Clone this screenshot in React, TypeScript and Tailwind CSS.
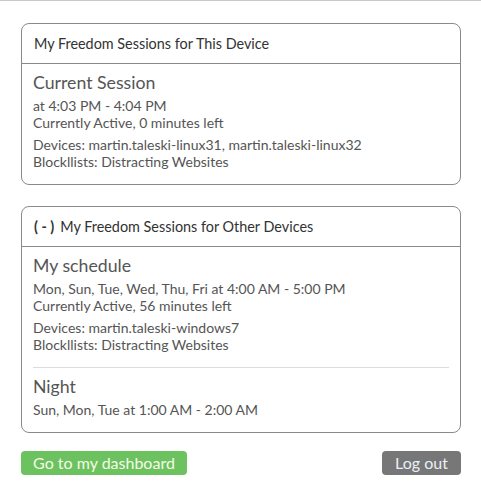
import React from 'react'

interface Session {
  name: string
  schedule: string
  status?: string
  devices?: string
  blocklists?: string
}

const thisDevice: Session[] = [
  {
    name: 'Current Session',
    schedule: 'at 4:03 PM - 4:04 PM',
    status: 'Currently Active, 0 minutes left',
    devices: 'martin.taleski-linux31, martin.taleski-linux32',
    blocklists: 'Distracting Websites',
  },
]

const otherDevices: Session[] = [
  {
    name: 'My schedule',
    schedule: 'Mon, Sun, Tue, Wed, Thu, Fri at 4:00 AM - 5:00 PM',
    status: 'Currently Active, 56 minutes left',
    devices: 'martin.taleski-windows7',
    blocklists: 'Distracting Websites',
  },
  {
    name: 'Night',
    schedule: 'Sun, Mon, Tue at 1:00 AM - 2:00 AM',
  },
]

function SessionItem({ s, first }: { s: Session; first: boolean }) {
  return (
    <div className={first ? 'pt-[7px]' : 'mt-[14px] border-t border-[#dcdcdc] pt-[7px]'}>
      <div className="text-[17.7px] leading-[24px] text-[#555]">{s.name}</div>
      <div className="mt-[2px] text-[14px] leading-[17px] text-[#555]">
        <div>{s.schedule}</div>
        {s.status && <div>{s.status}</div>}
      </div>
      {s.devices && (
        <div className="mt-[5px] text-[14px] leading-[17px] text-[#555]">
          <div>Devices: {s.devices}</div>
          <div>Blockllists: {s.blocklists}</div>
        </div>
      )}
    </div>
  )
}

function Card({ title, sessions, toggle }: { title: string; sessions: Session[]; toggle?: boolean }) {
  return (
    <div className="rounded-[8px] border border-[#8a8a8a] bg-white">
      <div className="flex h-[40px] items-center border-b border-[#8a8a8a] px-[12px] text-[14.4px] text-[#333]">
        {toggle && <span className="mr-[6px] font-bold whitespace-pre">( - )</span>}
        {title}
      </div>
      <div className="px-[11px] pb-[14px]">
        {sessions.map((s, i) => (
          <SessionItem key={s.name} s={s} first={i === 0} />
        ))}
      </div>
    </div>
  )
}

export default function App() {
  return (
    <div className="min-h-[494px] w-[481px] border-t border-[#c8c8c8] bg-white font-['Lato',sans-serif]">
      <div className="px-[21px] pt-[22px] pr-[20px]">
        <Card title="My Freedom Sessions for This Device" sessions={thisDevice} />
        <div className="mt-[21px]">
          <Card title="My Freedom Sessions for Other Devices" sessions={otherDevices} toggle />
        </div>
        <div className="mt-[18px] flex items-center justify-between">
          <button className="h-[24px] w-[166px] rounded-[4px] bg-[#6cc25f] text-[16px] leading-[24px] text-[#f4fbe8]">
            Go to my dashboard
          </button>
          <button className="h-[24px] w-[79px] rounded-[4px] bg-[#777] text-[16px] leading-[24px] text-[#e8f0f8]">
            Log out
          </button>
        </div>
      </div>
    </div>
  )
}
